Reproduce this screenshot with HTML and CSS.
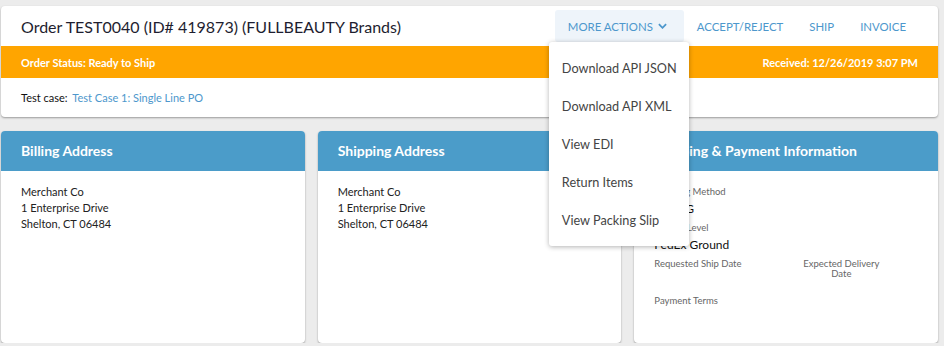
FILE: index.html
```html
<!DOCTYPE html>
<html lang="en">
<head>
  <meta charset="UTF-8" />
  <title>Order TEST0040</title>
  <link rel="stylesheet" href="styles.css">
</head>
<body>
  <div class="page">

    <section class="order-card">
      <header class="order-head">
        <h1 class="order-title">Order TEST0040 (ID# 419873) (FULLBEAUTY Brands)</h1>
        <nav class="order-actions">
          <div class="dropdown">
            <button class="action-btn is-open">
              MORE ACTIONS
              <svg class="chevron" viewBox="0 0 10 6" aria-hidden="true">
                <path d="M1 1 L5 5 L9 1" />
              </svg>
            </button>
            <ul class="dropdown-menu">
              <li>Download API JSON</li>
              <li>Download API XML</li>
              <li>View EDI</li>
              <li>Return Items</li>
              <li>View Packing Slip</li>
            </ul>
          </div>
          <a class="action-btn" href="#">ACCEPT/REJECT</a>
          <a class="action-btn" href="#">SHIP</a>
          <a class="action-btn" href="#">INVOICE</a>
        </nav>
      </header>

      <div class="status-bar">
        <span>Order Status: Ready to Ship</span>
        <span>Received: 12/26/2019 3:07 PM</span>
      </div>

      <div class="test-case">
        Test case: <a href="#">Test Case 1: Single Line PO</a>
      </div>
    </section>

    <div class="info-grid">
      <div class="info-card">
        <h2 class="info-title">Billing Address</h2>
        <div class="info-body">
          <div>Merchant Co</div>
          <div>1 Enterprise Drive</div>
          <div>Shelton, CT 06484</div>
        </div>
      </div>

      <div class="info-card">
        <h2 class="info-title">Shipping Address</h2>
        <div class="info-body">
          <div>Merchant Co</div>
          <div>1 Enterprise Drive</div>
          <div>Shelton, CT 06484</div>
        </div>
      </div>

      <div class="info-card">
        <h2 class="info-title">Shipping &amp; Payment Information</h2>
        <div class="info-body fields">
          <div class="field">
            <div class="field-label">Shipping Method</div>
            <div class="field-value">FDXCG</div>
          </div>
          <div class="field">
            <div class="field-label">Service Level</div>
            <div class="field-value">FedEx Ground</div>
          </div>
          <div class="field-row">
            <div class="field">
              <div class="field-label">Requested Ship Date</div>
            </div>
            <div class="field centered">
              <div class="field-label">Expected Delivery Date</div>
            </div>
          </div>
          <div class="field">
            <div class="field-label">Payment Terms</div>
          </div>
        </div>
      </div>
    </div>

  </div>
</body>
</html>
```

FILE: styles.css
```css
body {
  margin: 0;
  background: #ececec;
  font-family: 'Lato', 'Open Sans', sans-serif;
  color: #222;
}

.page {
  padding: 6px 6px 0 1px;
}

.order-card {
  background: white;
  border-radius: 4px;
  box-shadow: 0 1px 2px rgba(0, 0, 0, 0.35);
}

.order-head {
  display: flex;
  align-items: center;
  height: 40px;
  padding: 0 19px 0 20px;
}

.order-title {
  margin: 0;
  font-size: 16px;
  font-weight: normal;
  color: #1e1e30;
}

.order-actions {
  margin-left: auto;
  display: flex;
  align-items: center;
}

.dropdown {
  position: relative;
}

.action-btn {
  display: flex;
  align-items: center;
  height: 32px;
  padding: 0 13px;
  border: none;
  border-radius: 3px;
  background: none;
  font-family: inherit;
  font-size: 11.4px;
  color: #4d97cc;
  text-decoration: none;
  cursor: pointer;
}

.action-btn.is-open {
  background: #eef4fa;
  padding: 0 17px 0 13px;
}

.chevron {
  width: 9px;
  height: 6px;
  margin-left: 5px;
  fill: none;
  stroke: #4d97cc;
  stroke-width: 2;
}

.dropdown-menu {
  position: absolute;
  top: 32px;
  left: -6px;
  z-index: 10;
  width: 140px;
  margin: 0;
  padding: 7px 0 7px;
  list-style: none;
  background: white;
  border-radius: 3px;
  box-shadow: 0 1px 5px rgba(0, 0, 0, 0.3);
}

.dropdown-menu li {
  height: 38px;
  line-height: 38px;
  padding: 0 13px;
  font-size: 12.7px;
  color: #444;
  white-space: nowrap;
  cursor: pointer;
}

.status-bar {
  display: flex;
  justify-content: space-between;
  align-items: center;
  height: 32px;
  padding: 0 20px;
  background: #ffa500;
  color: white;
  font-size: 11px;
  font-weight: bold;
}

.test-case {
  height: 39px;
  line-height: 39px;
  padding: 0 20px;
  font-size: 11px;
  color: #111;
}

.test-case a {
  margin-left: 2px;
  color: #4d97cc;
  text-decoration: none;
}

.info-grid {
  display: grid;
  grid-template-columns: repeat(3, 1fr);
  gap: 13px;
  margin-top: 14px;
}

.info-card {
  height: 212px;
  background: white;
  border-radius: 4px;
  box-shadow: 0 1px 2px rgba(0, 0, 0, 0.35);
  overflow: hidden;
}

.info-title {
  margin: 0;
  height: 40px;
  line-height: 40px;
  padding: 0 20px;
  background: #4b9cc9;
  color: white;
  font-size: 14px;
  font-weight: bold;
}

.info-body {
  padding: 13px 20px;
  font-size: 11px;
  line-height: 16px;
  color: #222;
}

.fields {
  padding-top: 16px;
}

.field {
  margin-bottom: 5px;
}

.field-label {
  font-size: 9.5px;
  line-height: 10px;
  color: #666;
}

.field-value {
  margin-top: 3px;
  font-size: 12px;
  line-height: 18px;
  color: #111;
}

.field-row {
  display: grid;
  grid-template-columns: 147px 80px;
  margin-bottom: 12px;
}

.field.centered {
  text-align: center;
}
```
